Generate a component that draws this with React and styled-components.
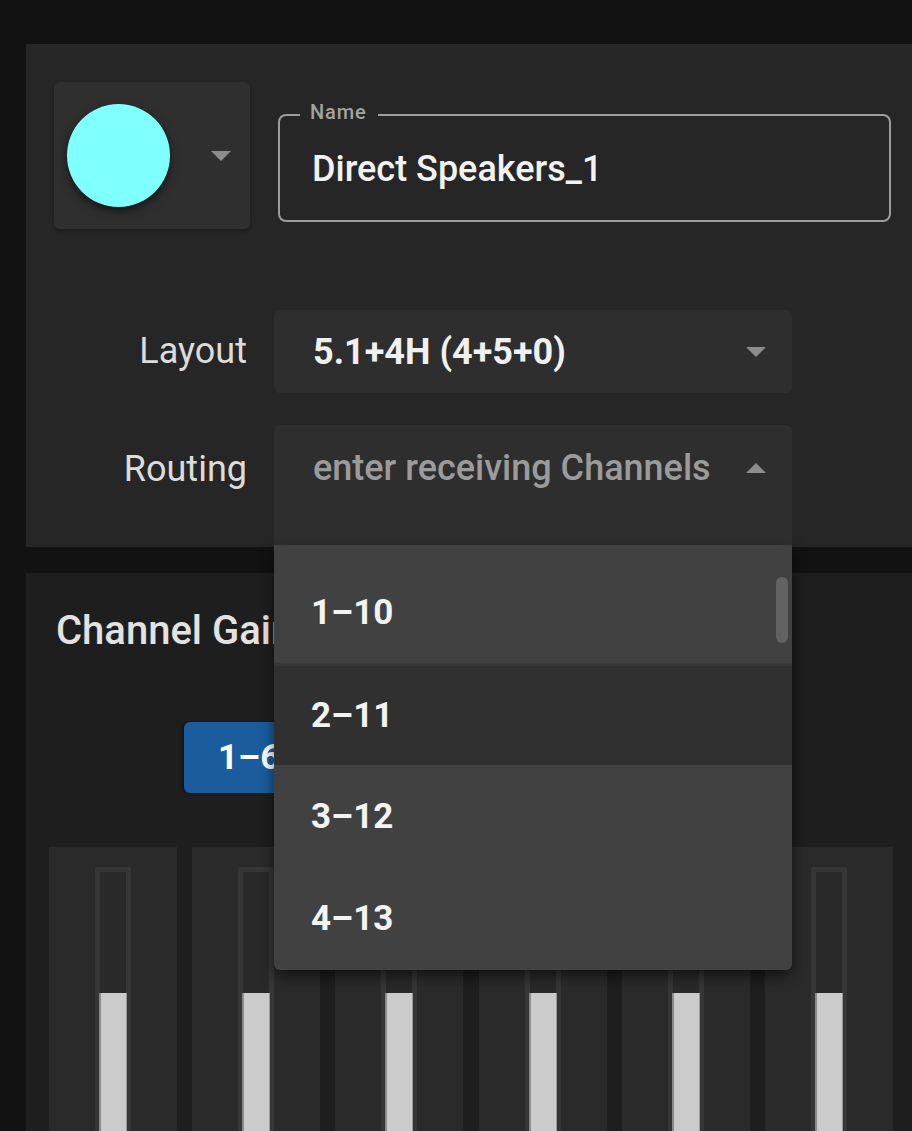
import React from 'react';
import styled, { createGlobalStyle } from 'styled-components';

const GlobalStyle = createGlobalStyle`
  html, body {
    margin: 0;
    padding: 0;
    background: #121212;
  }
  body {
    font-family: Roboto, 'Noto Sans', sans-serif;
    color: #eeeeee;
  }
`;

const Page = styled.div`
  position: relative;
  width: 912px;
  height: 1131px;
  overflow: hidden;
  box-sizing: border-box;
  padding: 44px 0 0 26px;
  background: #121212;
`;

const Panel = styled.section`
  box-sizing: border-box;
  background: ${({ tone }) => tone};
  height: ${({ h }) => h}px;
  padding: ${({ pad }) => pad};
  margin-top: ${({ gapTop }) => gapTop || 0}px;
`;

const TopRow = styled.div`
  display: flex;
  align-items: flex-start;
  gap: 28px;
`;

const ColourButton = styled.div`
  flex-shrink: 0;
  display: flex;
  align-items: center;
  box-sizing: border-box;
  width: 196px;
  height: 147px;
  padding: 0 19px 0 13px;
  border-radius: 6px;
  background: #2f2f2f;
  box-shadow: 0 2px 4px rgba(0, 0, 0, 0.25);
`;

const Swatch = styled.div`
  width: 103px;
  height: 103px;
  border-radius: 50%;
  background: ${({ colour }) => colour};
  box-shadow: 0 4px 10px rgba(0, 0, 0, 0.55);
`;

const Caret = styled.span`
  width: 0;
  height: 0;
  margin-left: auto;
  border-left: 10.5px solid transparent;
  border-right: 10.5px solid transparent;
  ${({ up }) =>
    up ? 'border-bottom: 10px solid #8c8c8c;' : 'border-top: 10px solid #8c8c8c;'}
`;

const NameField = styled.div`
  position: relative;
  flex-shrink: 0;
  margin-top: 32px;
  box-sizing: border-box;
  width: 613px;
  height: 108px;
  display: flex;
  align-items: center;
  padding: 2px 0 0 32px;
  border: 2px solid #9c9c9c;
  border-radius: 8px;
  font-size: 36px;
  font-weight: 500;
  color: #f2f2f2;
`;

// label sits on top of the outline, like an outlined text field
const FloatLabel = styled.span`
  position: absolute;
  top: -15px;
  left: 20px;
  padding: 0 11px 0 10px;
  background: #262626;
  font-size: 20px;
  font-weight: 500;
  letter-spacing: 0.9px;
  color: #a3a3a3;
  line-height: 22px;
`;

const Form = styled.div`
  display: flex;
  flex-direction: column;
  gap: 32px;
  margin-top: 81px;
`;

const FormRow = styled.div`
  display: grid;
  grid-template-columns: 193px 518px;
  column-gap: 27px;
  align-items: start;
`;

const RowLabel = styled.div`
  text-align: right;
  font-size: 36px;
  color: #dcdcdc;
  line-height: ${({ lh }) => lh}px;
`;

const Select = styled.div`
  box-sizing: border-box;
  height: ${({ h }) => h}px;
  display: flex;
  align-items: flex-start;
  padding: 0 26px 0 39px;
  border-radius: 6px 6px ${({ open }) => (open ? '0 0' : '6px 6px')};
  background: #2e2e2e;
`;

const SelectLine = styled.div`
  display: flex;
  align-items: center;
  width: 100%;
  height: ${({ lh }) => lh}px;
  font-size: 36px;
  font-weight: ${({ placeholder }) => (placeholder ? 500 : 700)};
  color: ${({ placeholder }) => (placeholder ? '#9b9b9b' : '#f0f0f0')};
`;

const Menu = styled.ul`
  position: absolute;
  left: 274px;
  top: 545px;
  width: 518px;
  height: 425px;
  margin: 0;
  padding: 16px 0 0;
  box-sizing: border-box;
  list-style: none;
  overflow: hidden;
  background: #414141;
  border-radius: 0 0 6px 6px;
  box-shadow: 0 6px 14px rgba(0, 0, 0, 0.55);
`;

const MenuItem = styled.li`
  box-sizing: border-box;
  height: 102px;
  display: flex;
  align-items: center;
  padding-left: 37px;
  font-size: 35px;
  font-weight: 700;
  color: #f3f3f3;
  background: ${({ selected }) => (selected ? '#303030' : 'transparent')};
  border-top: ${({ selected }) => (selected ? '3px solid #383838' : '0')};
`;

const Scrollbar = styled.div`
  position: absolute;
  right: 4px;
  top: 32px;
  width: 12px;
  height: 66px;
  border-radius: 6px;
  background: #626262;
`;

const SectionTitle = styled.h2`
  margin: 0;
  font-size: 40px;
  font-weight: 500;
  color: #e2e2e2;
  line-height: 40px;
  white-space: nowrap;
`;

const BankBar = styled.div`
  display: flex;
  margin: 71px 0 0 128px;
`;

const BankButton = styled.button`
  height: 71px;
  padding: 0 34px;
  border: 0;
  border-radius: 6px;
  font-family: inherit;
  font-size: 35px;
  font-weight: 700;
  color: #ffffff;
  background: ${({ active }) => (active ? '#1a5c9c' : '#2c2c2c')};
  box-shadow: -2px 0 3px rgba(0, 0, 0, 0.4);
`;

const Strips = styled.div`
  display: grid;
  grid-template-columns: repeat(6, 128px);
  column-gap: 15.2px;
  margin-top: 54px;
  margin-left: -7px;
`;

const Strip = styled.div`
  height: 300px;
  display: flex;
  justify-content: center;
  padding-top: 20px;
  background: #2a2a2a;
`;

const Track = styled.div`
  box-sizing: border-box;
  width: 36px;
  height: 400px;
  display: flex;
  flex-direction: column;
  justify-content: flex-end;
  padding: 0 2px;
  border: 5px solid #363636;
  border-bottom: 0;
  border-radius: 2px 2px 0 0;
  background: #292929;
`;

const Fill = styled.div`
  height: ${({ level }) => level}px;
  margin: 0 -3px;
  background: #cbcbcb;
  border-left: 2px solid #8a8a8a;
  border-right: 1px solid #9a9a9a;
`;

const ranges = ['1-10', '2-11', '3-12', '4-13'];
const channels = [1, 2, 3, 4, 5, 6];
const dash = (s) => s.replace('-', '\u2013');

export default function App() {
  return (
    <>
      <GlobalStyle />
      <Page>
        <Panel tone='#262626' h={503} pad='38px 0 0 28px'>
          <TopRow>
            <ColourButton>
              <Swatch colour='#80ffff' />
              <Caret />
            </ColourButton>
            <NameField>
              <FloatLabel>Name</FloatLabel>
              Direct Speakers_1
            </NameField>
          </TopRow>
          <Form>
            <FormRow>
              <RowLabel lh={83}>Layout</RowLabel>
              <Select h={83}>
                <SelectLine lh={83}>
                  5.1+4H (4+5+0)
                  <Caret />
                </SelectLine>
              </Select>
            </FormRow>
            <FormRow>
              <RowLabel lh={88}>Routing</RowLabel>
              <Select h={120} open>
                <SelectLine lh={86} placeholder>
                  enter receiving Channels
                  <Caret up />
                </SelectLine>
              </Select>
            </FormRow>
          </Form>
        </Panel>
        <Panel tone='#1e1e1e' h={600} pad='38px 30px 0' gapTop={26}>
          <SectionTitle>Channel Gain</SectionTitle>
          <BankBar>
            <BankButton active>{dash('1-6')}</BankButton>
          </BankBar>
          <Strips>
            {channels.map((c) => (
              <Strip key={c}>
                <Track>
                  <Fill level={274} />
                </Track>
              </Strip>
            ))}
          </Strips>
        </Panel>
        <Menu>
          {ranges.map((r, i) => (
            <MenuItem key={r} selected={i === 1}>
              {dash(r)}
            </MenuItem>
          ))}
          <Scrollbar />
        </Menu>
      </Page>
    </>
  );
}
